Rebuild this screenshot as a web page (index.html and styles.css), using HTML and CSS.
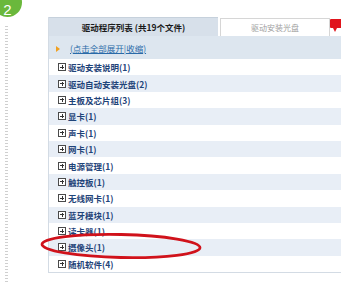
FILE: index.html
```html
<!DOCTYPE html>
<html lang="zh-CN">
<head>
<meta charset="utf-8">
<link rel="stylesheet" href="styles.css">
</head>
<body>
<div class="page">
  <div class="rail">
    <div class="badge">2</div>
    <div class="dots"></div>
  </div>
  <div class="panel">
    <div class="tabs">
      <div class="tab tab-active">驱动程序列表 (共19个文件)</div>
      <div class="tab tab-plain">驱动安装光盘</div>
      <div class="flag"></div>
    </div>
    <div class="expand">
      <span class="arrow"></span>
      <a class="expand-link">(点击全部展开|收缩)</a>
    </div>
    <ul class="list">
      <li class="row"><span class="plus"></span>驱动安装说明(1)</li>
      <li class="row"><span class="plus"></span>驱动自动安装光盘(2)</li>
      <li class="row"><span class="plus"></span>主板及芯片组(3)</li>
      <li class="row"><span class="plus"></span>显卡(1)</li>
      <li class="row"><span class="plus"></span>声卡(1)</li>
      <li class="row"><span class="plus"></span>网卡(1)</li>
      <li class="row"><span class="plus"></span>电源管理(1)</li>
      <li class="row"><span class="plus"></span>触控板(1)</li>
      <li class="row"><span class="plus"></span>无线网卡(1)</li>
      <li class="row"><span class="plus"></span>蓝牙模块(1)</li>
      <li class="row"><span class="plus"></span>读卡器(1)</li>
      <li class="row"><span class="plus"></span>摄像头(1)</li>
      <li class="row"><span class="plus"></span>随机软件(4)</li>
    </ul>
  </div>
</div>
<svg class="mark" width="341" height="284" viewBox="0 0 341 284">
  <ellipse cx="121" cy="246" rx="79" ry="11.5" transform="rotate(1.2 121 246)" fill="none" stroke="#d0121b" stroke-width="2.8"/>
</svg>
</body>
</html>
```

FILE: styles.css
```css
html, body {
  margin: 0;
  padding: 0;
  background: #ffffff;
  overflow: hidden;
  width: 341px;
  height: 284px;
}
body {
  position: relative;
  font-family: "Noto Sans CJK SC", "Noto Sans", sans-serif;
}
.page {
  display: flex;
  height: 284px;
}
.rail {
  width: 48px;
  flex: none;
  display: flex;
  flex-direction: column;
}
.badge {
  width: 29px;
  height: 29px;
  border-radius: 50%;
  background: #6ab83c;
  color: #ffffff;
  font-family: "Liberation Sans", sans-serif;
  font-size: 15px;
  line-height: 15px;
  text-align: center;
  margin: -12px 0 0 -7px;
  padding-top: 14px;
  box-sizing: border-box;
}
.dots {
  margin: 9px 0 0 5px;
  width: 3px;
  flex: 1;
  background: repeating-linear-gradient(to bottom, #cfcfcf 0, #cfcfcf 1px, transparent 1px, transparent 3px);
}
.panel {
  width: 320px;
  flex: none;
  margin-top: 17px;
  height: 256px;
  border-left: 1px solid #d3dbe4;
  border-bottom: 1px solid #d3dbe4;
  box-sizing: border-box;
}
.tabs {
  display: flex;
  height: 19px;
  position: relative;
  gap: 2px;
}
.tab {
  font-size: 8.5px;
  line-height: 18px;
  text-align: center;
  box-sizing: border-box;
}
.tab-active {
  width: 169px;
  background: #d7e0ea;
  border-top: 1px solid #c6d1dc;
  font-weight: bold;
  color: #1a1a1a;
}
.tab-plain {
  width: 110px;
  background: #ffffff;
  border: 1px solid #d6d6d6;
  border-bottom: none;
  color: #a0a0a0;
  font-size: 8px;
  margin-top: 1px;
  line-height: 17px;
}
.flag {
  position: absolute;
  left: 281px;
  top: 2px;
  width: 12px;
  height: 9px;
  background: #e0141c;
  border-radius: 1px;
}
.flag::after {
  content: "";
  position: absolute;
  left: 3px;
  top: 9px;
  border-left: 2px solid transparent;
  border-right: 2px solid transparent;
  border-top: 4px solid #e0141c;
}
.expand {
  height: 23px;
  background: #dde6ef;
  display: flex;
  align-items: center;
  padding-left: 7px;
  gap: 10px;
}
.arrow {
  width: 0;
  height: 0;
  border-top: 3px solid transparent;
  border-bottom: 3px solid transparent;
  border-left: 4px solid #f0a020;
  margin-top: 3px;
}
.expand-link {
  font-size: 8.5px;
  color: #2a6aa8;
  text-decoration: underline;
}
.list {
  list-style: none;
  margin: 0;
  padding: 0;
}
.row {
  height: 16.4px;
  display: flex;
  align-items: center;
  padding-left: 9px;
  gap: 2px;
  font-size: 8.5px;
  font-weight: bold;
  color: #1f4479;
}
.row:nth-child(even) {
  background: #e8eef6;
}
.plus {
  width: 8px;
  height: 8px;
  border: 1px solid #4a4a4a;
  box-sizing: border-box;
  background:
    linear-gradient(#333, #333) center / 4px 1px no-repeat,
    linear-gradient(#333, #333) center / 1px 4px no-repeat,
    #ffffff;
  flex: none;
}
.mark {
  position: absolute;
  left: 0;
  top: 0;
  pointer-events: none;
}
```
